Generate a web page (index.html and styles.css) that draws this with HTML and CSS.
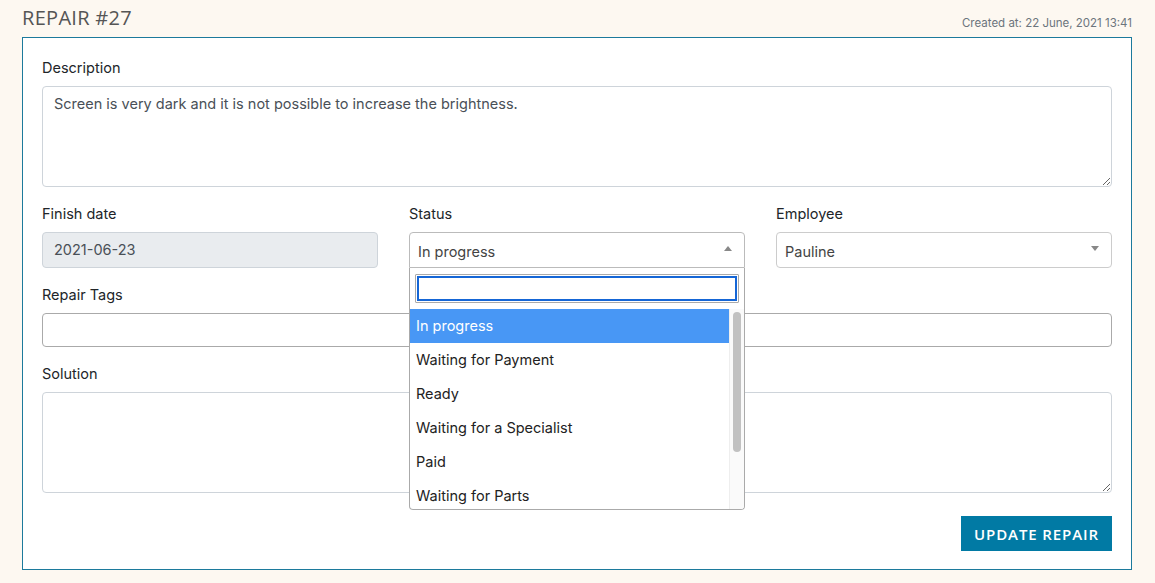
FILE: index.html
```html
<!DOCTYPE html>
<html lang="en">
<head>
    <meta charset="UTF-8">
    <title>Repair #27</title>
    <link rel="stylesheet" href="styles.css">
</head>
<body>
    <div class="page">
        <header class="top">
            <h1>REPAIR #27</h1>
            <small class="created">Created at: 22 June, 2021 13:41</small>
        </header>
        <form class="card">
            <div class="group">
                <label>Description</label>
                <textarea class="control area">Screen is very dark and it is not possible to increase the brightness.</textarea>
            </div>
            <div class="row">
                <div class="group">
                    <label>Finish date</label>
                    <div class="control readonly">2021-06-23</div>
                </div>
                <div class="group status">
                    <label>Status</label>
                    <div class="select open">
                        <span>In progress</span>
                        <b class="arrow up"></b>
                    </div>
                    <div class="dropdown">
                        <div class="search"><input type="text"></div>
                        <div class="results">
                            <ul>
                                <li class="hl">In progress</li>
                                <li>Waiting for Payment</li>
                                <li>Ready</li>
                                <li>Waiting for a Specialist</li>
                                <li>Paid</li>
                                <li>Waiting for Parts</li>
                            </ul>
                            <div class="scroll"><div class="thumb"></div></div>
                        </div>
                    </div>
                </div>
                <div class="group">
                    <label>Employee</label>
                    <div class="select">
                        <span>Pauline</span>
                        <b class="arrow"></b>
                    </div>
                </div>
            </div>
            <div class="group">
                <label>Repair Tags</label>
                <div class="tags"></div>
            </div>
            <div class="group">
                <label>Solution</label>
                <textarea class="control area"></textarea>
            </div>
            <div class="actions">
                <button type="button" class="btn">UPDATE REPAIR</button>
            </div>
        </form>
    </div>
</body>
</html>
```
FILE: styles.css
```css
body{
    margin:0;
    background:#fdf8f1;
    font-family:Inter,"Liberation Sans",sans-serif;
    color:#212529;
}
.page{
    padding:0 23px 0 22px;
}
.top{
    display:flex;
    justify-content:space-between;
    align-items:flex-end;
    height:37px;
}
.top h1{
    margin:0;
    font-family:"Open Sans",sans-serif;
    font-weight:500;
    font-size:20px;
    letter-spacing:0.3px;
    color:#555;
    align-self:flex-start;
    padding-top:4px;
}
.created{
    font-size:11.5px;
    color:#6c757d;
    padding-bottom:7px;
}
.card{
    display:block;
    background:#fff;
    border:1px solid #1c7a9c;
    padding:20px 19px 18px 19px;
}
.group{
    margin-bottom:17px;
    position:relative;
}
.group label{
    display:block;
    font-size:14.5px;
    line-height:20px;
    margin-bottom:8px;
}
.control{
    display:block;
    box-sizing:border-box;
    width:100%;
    border:1px solid #ced4da;
    border-radius:4px;
    font-family:inherit;
    font-size:14.5px;
    color:#495057;
    background:#fff;
}
.area{
    height:101px;
    padding:6px 11px;
    line-height:21px;
    resize:vertical;
}
.readonly{
    height:36px;
    line-height:34px;
    padding:0 11px;
    background:#e9ecef;
}
.row{
    display:grid;
    grid-template-columns:1fr 1fr 1fr;
    column-gap:31px;
}
.select{
    box-sizing:border-box;
    height:36px;
    border:1px solid #ccc;
    border-radius:4px;
    padding:0 8px;
    display:flex;
    align-items:center;
    justify-content:space-between;
    font-size:14.5px;
    color:#444;
    padding-top:2px;
}
.select.open{
    border-color:#bbb;
    border-radius:4px 4px 0 0;
}
.arrow{
    width:0;
    height:0;
    border-left:4px solid transparent;
    border-right:4px solid transparent;
    border-top:5px solid #888;
    margin:0 4px 6px 0;
}
.arrow.up{
    border-top:none;
    border-bottom:5px solid #888;
}
.dropdown{
    position:absolute;
    left:0;
    right:0;
    top:64px;
    height:242px;
    box-sizing:border-box;
    border:1px solid #aaa;
    border-top:none;
    border-radius:0 0 4px 4px;
    background:#fff;
    overflow:hidden;
    z-index:10;
}
.search{
    padding:6px 5px 6px 5px;
}
.search input{
    display:block;
    box-sizing:border-box;
    width:100%;
    height:29px;
    border:1px solid #aaa;
    border-radius:1px;
    box-shadow:inset 0 0 0 1px #fff, inset 0 0 0 3px #1566d6;
    outline:none;
    margin:0;
}
.results{
    display:flex;
}
.results ul{
    flex:1;
    list-style:none;
    margin:0;
    padding:0;
}
.results li{
    height:34px;
    line-height:34px;
    padding:0 6px;
    font-size:14.5px;
    color:#222;
}
.results li.hl{
    background:#4897f5;
    color:#fff;
}
.scroll{
    width:14px;
    background:#fafafa;
    border-left:1px solid #eee;
    padding-top:3px;
    height:206px;
}
.thumb{
    width:8px;
    height:140px;
    margin-left:3px;
    border-radius:4px;
    background:#c1c1c1;
}
.tags{
    box-sizing:border-box;
    height:34px;
    border:1px solid #aaa;
    border-radius:4px;
}
.actions{
    display:flex;
    justify-content:flex-end;
    margin-top:23px;
}
.btn{
    background:#017aa4;
    color:#fff;
    border:none;
    height:35px;
    padding:0 13px;
    font-family:"Open Sans",sans-serif;
    font-weight:600;
    font-size:15px;
    letter-spacing:0.9px;
    cursor:pointer;
}
```
